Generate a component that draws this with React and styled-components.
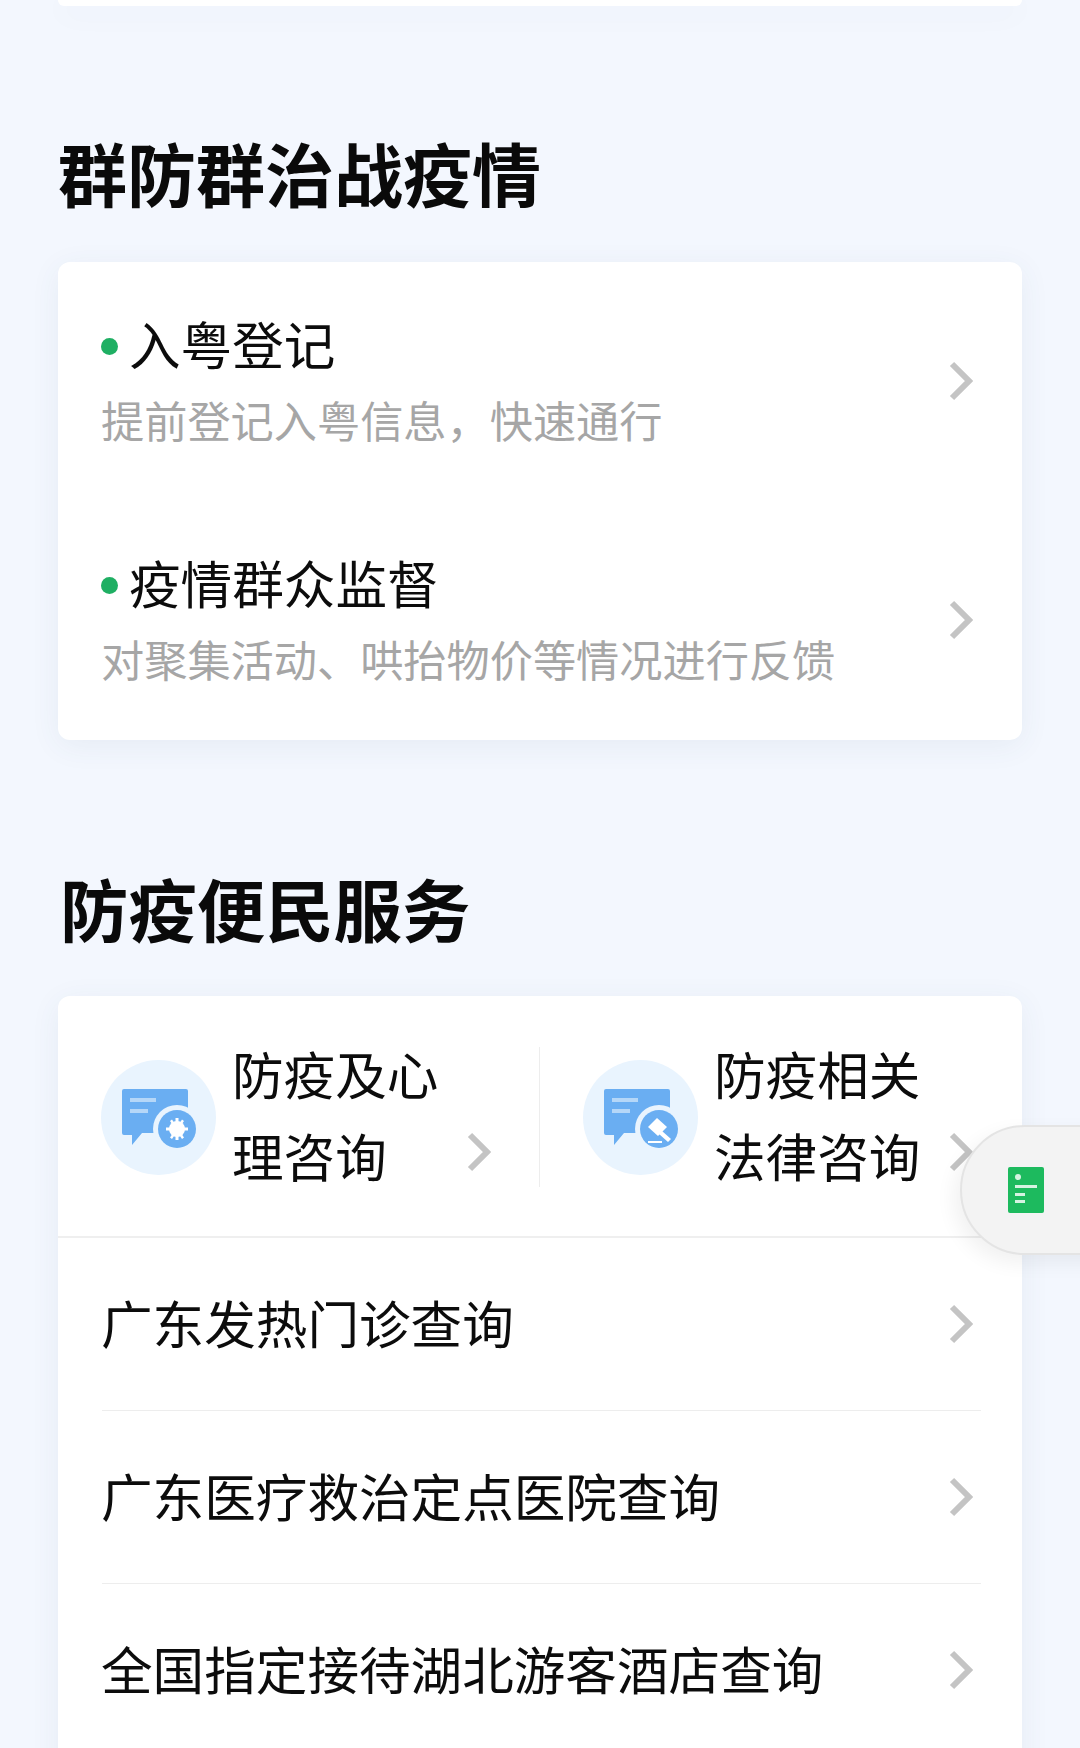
import styled, { createGlobalStyle } from "styled-components";

const GlobalStyle = createGlobalStyle`
    html, body {
        margin: 0;
        padding: 0;
        background: #F3F7FE;
    }
`

function Chevron() {
    return (
        <ChevronIcon viewBox="0 0 24 40">
            <path d="M3 3 L20 20 L3 37" fill="none" stroke="#C4C4C4" strokeWidth="6" />
        </ChevronIcon>
    )
}

function ServiceIcon({ kind }) {
    return (
        <IconCircle>
            <svg width="78" height="62" viewBox="0 0 78 62">
                <path d="M2 0 H64 Q66 0 66 2 V42 Q66 44 64 44 H20 L10 56 V46 H2 Q0 46 0 44 V2 Q0 0 2 0 Z" fill="#6AAEF2" />
                <rect x="8" y="9" width="26" height="4" fill="#B5D7F8" />
                <rect x="8" y="20" width="18" height="4" fill="#B5D7F8" />
                <circle cx="55" cy="40" r="24" fill="#E9F4FE" />
                <circle cx="55" cy="40" r="19" fill="#6AAEF2" />
                {kind === "gear" ? (
                    <g fill="#fff">
                        <circle cx="55" cy="40" r="8" />
                        <path d="M53.5 29 h3 v22 h-3 Z M44 38.5 h22 v3 h-22 Z" />
                        <path d="M48 32 l2 -1.5 l12 18 l-2 1.5 Z M62 32 l-2 -1.5 l-12 18 l2 1.5 Z" />
                    </g>
                ) : (
                    <g fill="#fff">
                        <path d="M53 29 L63 38 L54 47 L44 38 Z" />
                        <path d="M58 42 L67 50 L64 53 L55 45 Z" />
                        <rect x="44" y="52" width="14" height="2" />
                    </g>
                )}
            </svg>
        </IconCircle>
    )
}

function NoticeRow({ title, text }) {
    return (
        <NoticeItem>
            <div>
                <NoticeTitle><Dot />{title}</NoticeTitle>
                <NoticeText>{text}</NoticeText>
            </div>
            <Chevron />
        </NoticeItem>
    )
}

export default function App() {
    const services = ["广东发热门诊查询", "广东医疗救治定点医院查询", "全国指定接待湖北游客酒店查询"]

    return (
        <Page>
            <GlobalStyle />
            <TopCard />

            <Heading>群防群治战疫情</Heading>
            <NoticeCard>
                <NoticeRow title="入粤登记" text="提前登记入粤信息，快速通行" />
                <NoticeRow title="疫情群众监督" text="对聚集活动、哄抬物价等情况进行反馈" />
            </NoticeCard>

            <Heading $second>防疫便民服务</Heading>
            <ServiceCard>
                <Consults>
                    <Consult>
                        <ServiceIcon kind="gear" />
                        <ConsultName>防疫及心<br />理咨询</ConsultName>
                        <Chevron />
                    </Consult>
                    <Consult $right>
                        <ServiceIcon kind="law" />
                        <ConsultName>防疫相关<br />法律咨询</ConsultName>
                        <Chevron />
                    </Consult>
                </Consults>
                {services.map(name => (
                    <ServiceRow key={name}>
                        <ServiceName>{name}</ServiceName>
                        <Chevron />
                    </ServiceRow>
                ))}
            </ServiceCard>

            <FloatTab>
                <svg width="36" height="46" viewBox="0 0 36 46">
                    <rect width="36" height="46" rx="2" fill="#1DBA5E" />
                    <circle cx="10" cy="10" r="3" fill="#D5F3E1" />
                    <rect x="7" y="18" width="22" height="3" fill="#D5F3E1" />
                    <rect x="7" y="26" width="10" height="3" fill="#D5F3E1" />
                    <rect x="7" y="33" width="10" height="3" fill="#D5F3E1" />
                </svg>
            </FloatTab>
        </Page>
    )
}

const Page = styled.div`
    position: relative;
    box-sizing: border-box;

    width: 1080px;
    height: 1748px;
    padding: 0px 58px;
    overflow: hidden;

    background: #F3F7FE;
    font-family: "Noto Sans CJK SC", "Noto Sans", sans-serif;
    color: #0C0C0C;
`

const Card = styled.div`
    background: #FFFFFF;
    border-radius: 12px;
    box-shadow: 0px 6px 30px rgba(60, 80, 110, 0.07);
`

const TopCard = styled(Card)`
    height: 6px;
    border-radius: 0px 0px 12px 12px;
`

const Heading = styled.h1`
    height: 68px;
    margin: ${props => props.$second ? "134px 0px 0px 2px" : "132px 0px 0px 0px"};

    font-size: ${props => props.$second ? "68.4px" : "69px"};
    font-weight: 700;
    line-height: 68px;
    color: #0A0A0A;
`

const NoticeCard = styled(Card)`
    box-sizing: border-box;
    height: 478px;
    margin-top: 56px;
    padding-top: 48px;
`

const NoticeItem = styled.div`
    box-sizing: border-box;
    height: 239px;
    padding: 0px 49px 0px 43px;

    display: flex;
    justify-content: space-between;
    align-items: flex-start;

    svg {
        margin-top: 51px;
    }
`

const NoticeTitle = styled.div`
    display: flex;
    align-items: center;
    gap: 11px;

    height: 72px;
    margin-top: -3px;
    font-size: 51.6px;
    line-height: 72px;
`

const Dot = styled.span`
    width: 17px;
    height: 17px;
    margin-top: 6px;
    border-radius: 50%;
    background: #1FAF63;
`

const NoticeText = styled.div`
    margin-top: 10px;

    font-size: 43.2px;
    line-height: 60px;
    color: #A6A6A6;
`

const ChevronIcon = styled.svg`
    flex: none;
    width: 24px;
    height: 40px;
`

const ServiceCard = styled(Card)`
    height: 800px;
    margin-top: 54px;
`

const Consults = styled.div`
    height: 240px;
    border-bottom: 2px solid #EFEFEF;

    display: grid;
    grid-template-columns: 482px 482px;
`

const Consult = styled.div`
    box-sizing: border-box;
    height: 140px;
    margin-top: 51px;
    padding-left: 43px;
    border-right: ${props => props.$right ? "none" : "1px solid #EDEDED"};

    display: flex;
    align-items: center;

    > svg {
        margin-left: 27px;
        margin-top: 70px;
    }
`

const IconCircle = styled.div`
    flex: none;
    width: 115px;
    height: 115px;
    border-radius: 50%;
    background: #E9F4FE;

    display: flex;
    align-items: center;
    justify-content: center;

    svg {
        margin: 6px 0px 0px 4px;
    }
`

const ConsultName = styled.div`
    width: 208px;
    margin: -6px 0px 0px 16px;

    font-size: 51.6px;
    line-height: 82px;
    white-space: nowrap;
`

const ServiceRow = styled.div`
    box-sizing: border-box;
    height: 173px;
    margin: 0px 41px 0px 44px;
    padding-right: 8px;
    border-bottom: 1px solid #EDEDED;

    display: flex;
    justify-content: space-between;
    align-items: center;

    font-size: 51.6px;
`

const ServiceName = styled.span`
    margin: -6px 0px 0px -1px;
`

const FloatTab = styled.div`
    position: absolute;
    top: 1125px;
    right: -60px;

    box-sizing: border-box;
    width: 180px;
    height: 130px;
    padding-left: 46px;

    background: #F3F3F3;
    border: 2px solid #E4E4E4;
    border-radius: 65px 0px 0px 65px;
    box-shadow: -6px 8px 20px rgba(0, 0, 0, 0.06);

    display: flex;
    align-items: center;
`
